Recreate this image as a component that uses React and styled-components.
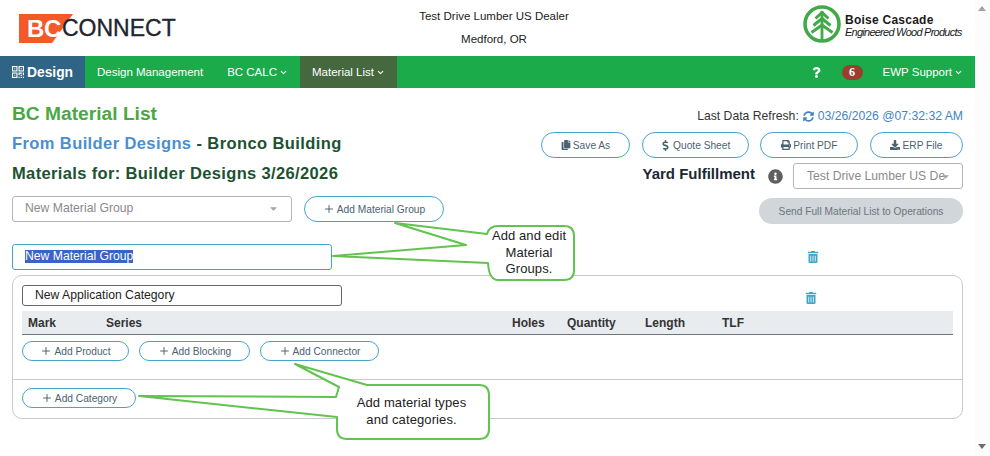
import React from "react"
import styled, { createGlobalStyle } from "styled-components"
import { FaCopy, FaDollarSign, FaPrint, FaDownload, FaSyncAlt, FaInfoCircle, FaTrashAlt, FaQuestion, FaCaretDown } from "react-icons/fa"
import { FiChevronDown } from "react-icons/fi"
import { Plus } from "lucide-react"

const GlobalStyle = createGlobalStyle`
  html, body {
    margin: 0;
    height: 100%;
    overflow: hidden;
    background: #fff;
    font-family: "Liberation Sans", Arial, sans-serif;
  }
  * {
    box-sizing: border-box;
  }
`

const AddButton = ({ width, children }) => (
  <PillButton $width={width}>
    <Plus size={12} strokeWidth={1.8} color="#3f5a6a" />
    {children}
  </PillButton>
)

const QrIcon = () => (
  <svg width="12" height="12" viewBox="0 0 12 12">
    <g fill="none" stroke="#fff" strokeWidth="1.1">
      <rect x="0.55" y="0.55" width="4.4" height="4.4" />
      <rect x="7.05" y="0.55" width="4.4" height="4.4" />
      <rect x="0.55" y="7.05" width="4.4" height="4.4" />
    </g>
    <path d="M2.2 2.2h1.1v1.1H2.2zM8.7 2.2h1.1v1.1H8.7zM2.2 8.7h1.1v1.1H2.2z" fill="#fff" />
    <path d="M6.5 6.5h3.5v1.2H7.7v1.5H6.5zM10.8 6.5H12v2.7h-1.2zM8.7 8.7h1.2v1.2H8.7zM6.5 10.8h1.2V12H6.5zM8.7 10.8h1.2V12H8.7zM10.8 10.8H12V12h-1.2z" fill="#fff" />
  </svg>
)

const App = () => {
  return (
    <>
      <GlobalStyle />
      <Window>
        <Page>
          <Header>
            <BcLogo>
              <BcMark>
                <svg width="54" height="29" viewBox="0 0 54 29">
                  <path d="M0 0H54L33 29H0Z" fill="#f4592a" />
                </svg>
                <BcLetters>BC</BcLetters>
              </BcMark>
              <ConnectWord>CONNECT</ConnectWord>
            </BcLogo>
            <DealerInfo>
              <div>Test Drive Lumber US Dealer</div>
              <div>Medford, OR</div>
            </DealerInfo>
            <BoiseLogo>
              <svg width="38" height="38" viewBox="0 0 38 38">
                <circle cx="19" cy="19" r="17" fill="none" stroke="#41a94a" strokeWidth="3.6" />
                <path d="M19 6V35" fill="none" stroke="#41a94a" strokeWidth="2.8" />
                <path
                  d="M12.5 13.5L19 7.5l6.5 6M10.5 20.5L19 13.5l8.5 7M8.5 27.5L19 20l10.5 7.5"
                  fill="none"
                  stroke="#41a94a"
                  strokeWidth="3"
                />
              </svg>
              <BoiseText>
                <BoiseName>Boise Cascade</BoiseName>
                <BoiseTagline>Engineered Wood Products</BoiseTagline>
              </BoiseText>
            </BoiseLogo>
          </Header>

          <NavBar>
            <DesignTab>
              <QrIcon />
              Design
            </DesignTab>
            <NavItem>Design Management</NavItem>
            <NavItem>
              BC CALC
              <FiChevronDown size={9} strokeWidth={3} />
            </NavItem>
            <NavItem $active>
              Material List
              <FiChevronDown size={9} strokeWidth={3} />
            </NavItem>
            <NavRight>
              <FaQuestion size={11} />
              <CountBadge>6</CountBadge>
              <SupportMenu>
                EWP Support
                <FiChevronDown size={9} strokeWidth={3} />
              </SupportMenu>
            </NavRight>
          </NavBar>

          <Content>
            <TopSection>
              <TitleColumn>
                <PageTitle>BC Material List</PageTitle>
                <SubTitle>
                  <SubTitleLink>From Builder Designs</SubTitleLink> - Bronco Building
                </SubTitle>
                <MaterialsFor>Materials for: Builder Designs 3/26/2026</MaterialsFor>
              </TitleColumn>
              <ActionColumn>
                <RefreshLine>
                  Last Data Refresh:
                  <RefreshValue>
                    <FaSyncAlt size={11} />
                    03/26/2026 @07:32:32 AM
                  </RefreshValue>
                </RefreshLine>
                <ActionRow>
                  <PillButton $width={89}>
                    <FaCopy size={10} />
                    Save As
                  </PillButton>
                  <PillButton $width={107}>
                    <FaDollarSign size={11} />
                    Quote Sheet
                  </PillButton>
                  <PillButton $width={98}>
                    <FaPrint size={10} />
                    Print PDF
                  </PillButton>
                  <PillButton $width={93}>
                    <FaDownload size={10} />
                    ERP File
                  </PillButton>
                </ActionRow>
                <YardRow>
                  <YardLabel>Yard Fulfillment</YardLabel>
                  <FaInfoCircle size={15} color="#5f5f5f" />
                  <YardSelect>
                    <YardValue>Test Drive Lumber US De</YardValue>
                    <YardCaret>
                      <FaCaretDown size={11} color="#a5a5a5" />
                    </YardCaret>
                  </YardSelect>
                </YardRow>
              </ActionColumn>
            </TopSection>

            <GroupRow>
              <GroupSelect>
                New Material Group
                <FaCaretDown size={11} color="#a5a5a5" />
              </GroupSelect>
              <AddButton width={140}>Add Material Group</AddButton>
              <SendButton>Send Full Material List to Operations</SendButton>
            </GroupRow>

            <NameRow>
              <GroupNameInput>
                <SelectedText>New Material Group</SelectedText>
              </GroupNameInput>
              <TrashIcon $right={144}>
                <FaTrashAlt size={12} />
              </TrashIcon>
            </NameRow>

            <CategoryCard>
              <CategoryTop>
                <NameRow $flush>
                  <CategoryInput>New Application Category</CategoryInput>
                  <TrashIcon $right={136} $top={4}>
                    <FaTrashAlt size={12} />
                  </TrashIcon>
                </NameRow>
                <TableHead>
                  <MarkCol>Mark</MarkCol>
                  <SeriesCol>Series</SeriesCol>
                  <HolesCol>Holes</HolesCol>
                  <QuantityCol>Quantity</QuantityCol>
                  <LengthCol>Length</LengthCol>
                  <span>TLF</span>
                </TableHead>
                <ProductRow>
                  <AddButton width={107}>Add Product</AddButton>
                  <AddButton width={111}>Add Blocking</AddButton>
                  <AddButton width={119}>Add Connector</AddButton>
                </ProductRow>
              </CategoryTop>
              <CategoryBottom>
                <AddButton width={114}>Add Category</AddButton>
              </CategoryBottom>
            </CategoryCard>
          </Content>

          <CalloutArt width="975" height="456" viewBox="0 0 975 456">
            <path
              d="M395 223L487 234Q489 226 498 226H564Q574 226 574 236V270Q574 280 564 280H498Q489 280 488 263L333 256L466 245Z"
              fill="#fff"
              stroke="#63c34f"
              strokeWidth="2"
              strokeLinejoin="round"
            />
            <path
              d="M295 364L367 385H479Q489 385 489 395V429Q489 439 479 439H347Q337 439 337 429V417L139 396L336 397L339 387Z"
              fill="#fff"
              stroke="#63c34f"
              strokeWidth="2"
              strokeLinejoin="round"
            />
          </CalloutArt>
          <GroupsNote>
            Add and edit
            <br />
            Material
            <br />
            Groups.
          </GroupsNote>
          <TypesNote>
            Add material types
            <br />
            and categories.
          </TypesNote>
        </Page>

        <ScrollTrack>
          <ScrollArrow $up />
          <ScrollArrow />
        </ScrollTrack>
      </Window>
    </>
  )
}

export default App

const Window = styled.div`
  display: flex;
  width: 990px;
  height: 456px;
  overflow: hidden;
`

const Page = styled.div`
  position: relative;
  flex: 1;
  min-width: 0;
`

const Header = styled.header`
  display: grid;
  grid-template-columns: 400px 188px 1fr;
  height: 56px;
`

const BcLogo = styled.div`
  display: flex;
  align-items: center;
  padding-left: 19px;
  padding-top: 1px;
`

const BcMark = styled.div`
  position: relative;
  width: 43px;
  height: 29px;
  svg {
    display: block;
  }
`

const BcLetters = styled.span`
  position: absolute;
  left: 8px;
  top: 3px;
  font-size: 24px;
  line-height: 24px;
  font-weight: 700;
  letter-spacing: -0.4px;
  color: #fff;
`

const ConnectWord = styled.span`
  position: relative;
  font-size: 23px;
  letter-spacing: 0;
  color: #20262e;
  -webkit-text-stroke: 0.35px #20262e;
`

const DealerInfo = styled.div`
  display: flex;
  flex-direction: column;
  align-items: center;
  gap: 8px;
  padding-top: 9px;
  font-size: 11.5px;
  line-height: 15px;
  color: #222;
  white-space: nowrap;
`

const BoiseLogo = styled.div`
  display: flex;
  align-items: center;
  gap: 4px;
  padding-left: 215px;
  padding-top: 2px;
  height: 46px;
`

const BoiseText = styled.div`
  display: flex;
  flex-direction: column;
  padding-top: 4px;
  color: #1a1a1a;
  white-space: nowrap;
`

const BoiseName = styled.span`
  font-size: 12px;
  line-height: 12px;
  font-weight: 700;
  letter-spacing: 0.25px;
`

const BoiseTagline = styled.span`
  font-size: 11px;
  line-height: 13px;
  font-style: italic;
  letter-spacing: -0.75px;
`

const NavBar = styled.nav`
  display: flex;
  align-items: stretch;
  height: 32px;
  background: #1cab4b;
  color: #fff;
  font-size: 11.5px;
`

const DesignTab = styled.div`
  display: flex;
  align-items: center;
  gap: 3px;
  width: 85px;
  padding-left: 12px;
  background: #2f6485;
  font-size: 13.8px;
  font-weight: 700;
`

const NavItem = styled.div`
  display: flex;
  align-items: center;
  gap: 2px;
  padding: 0 12px;
  background: ${props => (props.$active ? "#46683f" : "transparent")};
`

const NavRight = styled.div`
  display: flex;
  align-items: center;
  margin-left: auto;
  padding-right: 12px;
  gap: 20px;
`

const CountBadge = styled.span`
  display: flex;
  align-items: center;
  justify-content: center;
  width: 21px;
  height: 15px;
  border-radius: 8px;
  background: #9a3f2e;
  font-family: "Liberation Serif", serif;
  font-size: 12px;
  font-weight: 700;
`

const SupportMenu = styled.span`
  display: flex;
  align-items: center;
  gap: 2px;
`

const Content = styled.main`
  padding: 0 12px;
`

const TopSection = styled.section`
  display: flex;
  justify-content: space-between;
  height: 108px;
`

const TitleColumn = styled.div`
  display: flex;
  flex-direction: column;
`

const PageTitle = styled.h1`
  margin: 14px 0 0;
  font-size: 19.2px;
  line-height: 24px;
  font-weight: 700;
  color: #4aa843;
`

const SubTitle = styled.h2`
  margin: 6px 0 0;
  font-size: 16.5px;
  line-height: 22px;
  font-weight: 700;
  letter-spacing: 0.4px;
  color: #1c5232;
`

const SubTitleLink = styled.span`
  color: #4a8fd0;
`

const MaterialsFor = styled.h3`
  margin: 8px 0 0;
  font-size: 16.5px;
  line-height: 22px;
  font-weight: 700;
  letter-spacing: 0.36px;
  color: #1c5232;
`

const ActionColumn = styled.div`
  display: flex;
  flex-direction: column;
  align-items: flex-end;
`

const RefreshLine = styled.div`
  display: flex;
  align-items: center;
  gap: 4px;
  margin-top: 20px;
  height: 16px;
  font-size: 12.2px;
  color: #333;
`

const RefreshValue = styled.span`
  display: flex;
  align-items: center;
  gap: 4px;
  color: #3f85c5;
`

const ActionRow = styled.div`
  display: flex;
  gap: 11.67px;
  margin-top: 8px;
`

const PillButton = styled.button`
  display: flex;
  align-items: center;
  justify-content: center;
  gap: 2px;
  flex: none;
  width: ${props => props.$width}px;
  height: 26px;
  padding: 0;
  border: 1px solid #45a5c8;
  border-radius: 14px;
  background: #fff;
  font-family: inherit;
  font-size: 10.2px;
  color: #4a6272;
`

const YardRow = styled.div`
  display: flex;
  align-items: center;
  margin-top: 5px;
  height: 26px;
`

const YardLabel = styled.span`
  margin-right: 13px;
  margin-bottom: 6px;
  font-size: 15px;
  font-weight: 700;
  color: #1c2733;
`

const YardSelect = styled.div`
  display: flex;
  align-items: center;
  width: 170px;
  height: 26px;
  margin-left: 10px;
  padding: 0 8px 0 13px;
  border: 1px solid #b5b5b5;
  border-radius: 3px;
  font-size: 12.2px;
  color: #8a8a8a;
`

const YardValue = styled.span`
  flex: none;
  white-space: nowrap;
`

const YardCaret = styled.span`
  display: flex;
  margin-left: -5px;
`

const GroupRow = styled.div`
  display: flex;
  gap: 12px;
  height: 26px;
`

const GroupSelect = styled.div`
  display: flex;
  align-items: center;
  justify-content: space-between;
  width: 280px;
  height: 26px;
  padding: 0 12px 2px;
  border: 1px solid #b5b5b5;
  border-radius: 3px;
  font-size: 12.2px;
  color: #8a8a8a;
`

const SendButton = styled.button`
  width: 204px;
  height: 26px;
  margin-left: auto;
  margin-top: 2px;
  padding: 0;
  border: 0;
  border-radius: 13px;
  background: #d0d6da;
  font-family: inherit;
  font-size: 10.2px;
  color: #6c757d;
`

const NameRow = styled.div`
  display: flex;
  align-items: center;
  justify-content: space-between;
  margin-top: ${props => (props.$flush ? 0 : 22)}px;
`

const GroupNameInput = styled.div`
  display: flex;
  align-items: center;
  width: 320px;
  height: 26px;
  padding: 0 0 1px 12px;
  border: 1px solid #45a5c8;
  border-radius: 3px;
  font-size: 12.2px;
`

const SelectedText = styled.span`
  background: #3a62c8;
  color: #fff;
  line-height: 13px;
`

const TrashIcon = styled.span`
  display: flex;
  margin-right: ${props => props.$right}px;
  margin-top: ${props => props.$top || 0}px;
  color: #45a5c8;
`

const CategoryCard = styled.section`
  width: 951px;
  height: 144px;
  margin-top: 5px;
  border: 1px solid #c5cbce;
  border-radius: 10px;
  display: flex;
  flex-direction: column;
`

const CategoryTop = styled.div`
  display: flex;
  flex-direction: column;
  height: 104px;
  padding: 9px 9px 0;
  border-bottom: 1px solid #c5cbce;
`

const CategoryInput = styled.div`
  display: flex;
  align-items: center;
  width: 320px;
  height: 21px;
  padding: 0 0 2px 12px;
  border: 1px solid #666;
  border-radius: 3px;
  font-size: 12.2px;
  color: #222;
`

const TableHead = styled.div`
  display: flex;
  align-items: center;
  height: 24px;
  margin-top: 5px;
  padding-left: 6px;
  border-bottom: 1px solid #6c757d;
  background: #e9ecef;
  font-size: 12px;
  font-weight: 700;
  color: #333;
`

const MarkCol = styled.span`
  width: 78px;
`

const SeriesCol = styled.span`
  width: 406px;
`

const HolesCol = styled.span`
  width: 55px;
`

const QuantityCol = styled.span`
  width: 78px;
`

const LengthCol = styled.span`
  width: 77px;
`

const ProductRow = styled.div`
  display: flex;
  gap: 10px;
  margin-top: 6px;
  button {
    height: 20px;
  }
`

const CategoryBottom = styled.div`
  padding: 8px 9px;
  button {
    height: 20px;
  }
`

const CalloutArt = styled.svg`
  position: absolute;
  left: 0;
  top: 0;
  pointer-events: none;
`

const CalloutText = styled.div`
  position: absolute;
  text-align: center;
  font-size: 13px;
  line-height: 16.5px;
  letter-spacing: 0.1px;
  color: #222;
`

const GroupsNote = styled(CalloutText)`
  left: 488px;
  top: 228px;
  width: 82px;
`

const TypesNote = styled(CalloutText)`
  left: 337px;
  top: 395px;
  width: 149px;
`

const ScrollTrack = styled.div`
  display: flex;
  flex-direction: column;
  justify-content: space-between;
  width: 15px;
  padding: 6px 3px 7px;
  background: #fcfcfc;
`

const ScrollArrow = styled.span`
  width: 0;
  height: 0;
  border-left: 4.5px solid transparent;
  border-right: 4.5px solid transparent;
  border-${props => (props.$up ? "bottom" : "top")}: 5px solid ${props => (props.$up ? "#a3a3a3" : "#6e6e6e")};
`
